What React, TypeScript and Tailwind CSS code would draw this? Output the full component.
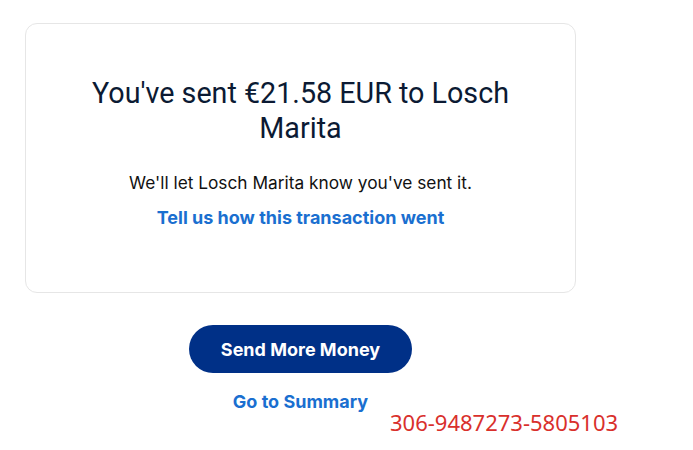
import React from 'react';

const App: React.FC = () => {
  return (
    <div className="min-h-screen bg-white pl-[25px] pt-[23px]" style={{ fontFamily: 'Inter, "Liberation Sans", sans-serif' }}>
      <div className="w-[551px]">
        {/* Confirmation card */}
        <div className="h-[270px] rounded-[12px] border border-[#e6e6e6] px-10 pt-[52px] text-center">
          <h1
            className="mx-auto w-[430px] text-[28.7px] leading-[35px] text-[#0b1a33]"
            style={{ fontFamily: '"Liberation Sans Narrow", Roboto, sans-serif' }}
          >
            You've sent €21.58 EUR to Losch Marita
          </h1>
          <p className="mt-[25px] text-[17.3px] leading-6 text-[#111]">We'll let Losch Marita know you've sent it.</p>
          <a href="#" className="mt-[11px] block text-[18px] font-bold leading-6 text-[#1a6fd0]">
            Tell us how this transaction went
          </a>
        </div>

        <div className="mt-[32px] flex flex-col items-center">
          <button className="h-[48px] w-[223px] rounded-full bg-[#003087] text-[18px] font-bold text-white">
            Send More Money
          </button>
          <a href="#" className="mt-[17px] block text-[18px] font-bold leading-6 text-[#1a6fd0]">
            Go to Summary
          </a>
        </div>
      </div>
      <div
        className="ml-[365px] -mt-[4px] text-[22px] leading-6 text-[#d9302c]"
        style={{ fontFamily: '"Noto Sans", sans-serif' }}
      >
        306-9487273-5805103
      </div>
    </div>
  );
};

export default App;
